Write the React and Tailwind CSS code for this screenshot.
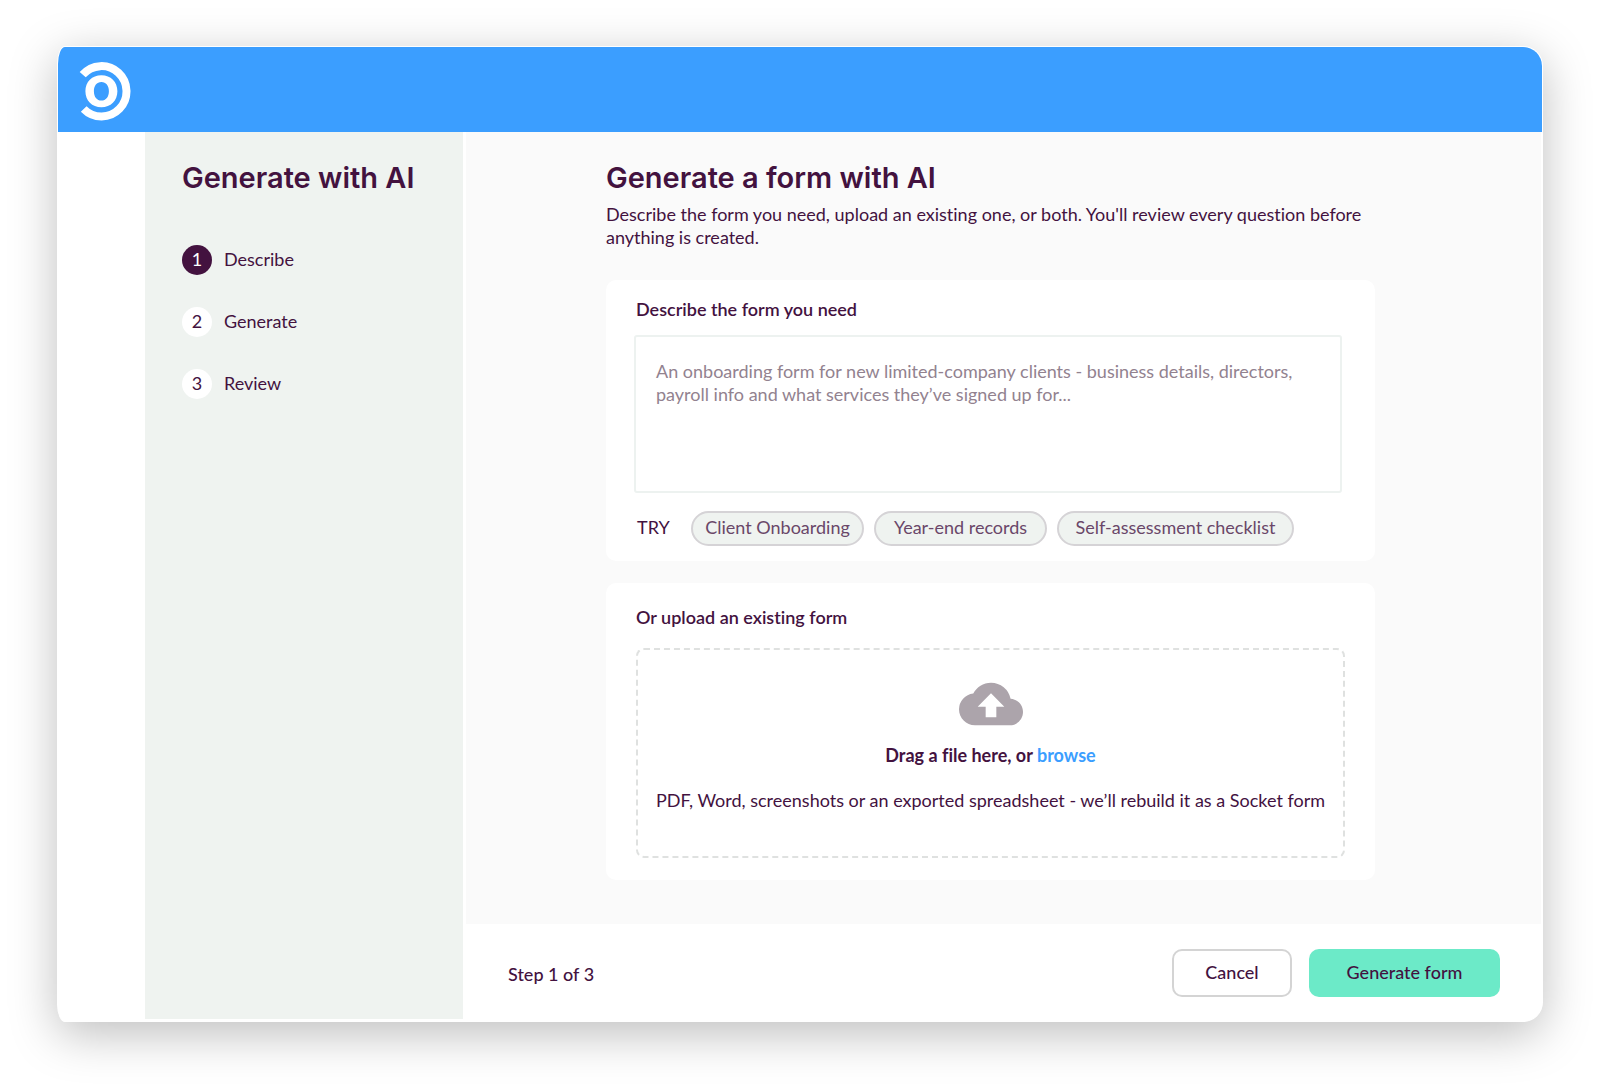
import { useRef, useState } from "react";
import { MdCloudUpload } from "react-icons/md";

const steps = ["Describe", "Generate", "Review"];

const suggestions = [
  { label: "Client Onboarding", width: "w-[173px]" },
  { label: "Year-end records", width: "w-[173px]" },
  { label: "Self-assessment checklist", width: "w-[237px]" },
];

function Logo() {
  return (
    <svg viewBox="0 0 52 60" className="w-[52px] h-[60px]" fill="none" stroke="#fff" aria-label="Socket">
      <path d="M3.7 12.7A25 25.2 0 1 1 4.7 47" strokeWidth="8" />
      <path
        d="M22.4 13.3c9.4 0 16 6.700 16 16s-6.600 16-16 16-16-6.700-16-16 6.600-16 16-16zm0 6.700c-4.600 0-7.500 3.700-7.500 9.300s2.900 9.300 7.500 9.300 7.500-3.700 7.500-9.300-2.900-9.300-7.500-9.300z"
        fill="#fff"
        fillRule="evenodd"
        stroke="none"
      />
    </svg>
  );
}

function Sidebar({ current }) {
  return (
    <aside className="w-[318px] shrink-0 bg-[#eff3f0] pl-[37px] pt-7 mb-0.5">
      <h2 className="font-['Inter',sans-serif] text-[29px] leading-9 font-semibold">Generate with AI</h2>
      <ol className="mt-[49px] flex flex-col gap-8">
        {steps.map((step, i) => (
          <li key={step} className="flex items-center gap-3">
            <span
              className={
                i + 1 === current
                  ? "size-[30px] pb-0.5 rounded-full flex items-center justify-center bg-[#43123f] text-white"
                  : "size-[30px] pb-0.5 rounded-full flex items-center justify-center bg-white"
              }
            >
              {i + 1}
            </span>
            <span className="pb-0.5">{step}</span>
          </li>
        ))}
      </ol>
    </aside>
  );
}

function DescribeCard({ value, onChange }) {
  return (
    <section className="bg-white rounded-[10px] pt-[17px] pb-[15px] pl-7 pr-[33px]">
      <label htmlFor="description" className="block pl-0.5 leading-6 font-semibold">
        Describe the form you need
      </label>
      <textarea
        id="description"
        value={value}
        onChange={(e) => onChange(e.target.value)}
        placeholder="An onboarding form for new limited-company clients - business details, directors, payroll info and what services they’ve signed up for..."
        className="block mt-[14px] w-full h-[158px] resize-none rounded-[3px] border-2 border-[#edf2f0] px-5 py-[23px] leading-[23px] placeholder:text-[#92828f] outline-none"
      />
      <div className="mt-[18px] flex items-center gap-2.5">
        <span className="w-[47px] pl-[3px] pb-0.5">TRY</span>
        {suggestions.map((s) => (
          <button
            key={s.label}
            type="button"
            onClick={() => onChange(s.label)}
            className={`${s.width} h-[35px] pb-0.5 rounded-full border-2 border-[#d5d3d6] bg-[#eff3f0] text-[#6a4769] whitespace-nowrap`}
          >
            {s.label}
          </button>
        ))}
      </div>
    </section>
  );
}

function UploadCard() {
  const fileInput = useRef(null);

  return (
    <section className="mt-[22px] bg-white rounded-[10px] pt-[22px] pb-[22px] px-[30px]">
      <h3 className="leading-6 font-semibold">Or upload an existing form</h3>
      <div className="mt-[19px] rounded-lg border-2 border-dashed border-[#dfe1e0] pt-[22px] pb-11 flex flex-col items-center text-center">
        <MdCloudUpload className="size-16 text-[#aca4ab]" />
        <p className="mt-[7px] leading-6 font-bold">
          Drag a file here, or{" "}
          <button type="button" className="text-[#3b9eff]" onClick={() => fileInput.current.click()}>
            browse
          </button>
        </p>
        <input ref={fileInput} type="file" aria-label="Upload a form" className="hidden" />
        <p className="mt-[21px] leading-6">
          PDF, Word, screenshots or an exported spreadsheet - we’ll rebuild it as a Socket form
        </p>
      </div>
    </section>
  );
}

export default function App() {
  const [description, setDescription] = useState("");

  return (
    <div className="min-h-screen bg-white flex pt-[46px] pb-[68px] px-[57px] font-['Lato',sans-serif] [font-variant-ligatures:no-common-ligatures] text-[18px] leading-[23px] text-[#43123f]">
      <div className="flex-1 flex flex-col bg-white overflow-hidden border border-white [border-radius:8px_20px_20px_8px/18px_20px_20px_18px] shadow-[0_12px_48px_rgba(0,0,0,0.26)]">
        {/* Top bar */}
        <header className="h-[85px] shrink-0 bg-[#3b9eff] flex items-center pt-1 pl-[21px]">
          <Logo />
        </header>

        <div className="flex-1 flex pl-[87px]">
          <Sidebar current={1} />

          <div className="flex-1 flex flex-col ml-[3px]">
            <main className="flex-1 bg-[#fafafa] mr-px pl-[140px] pr-12 pt-7 pb-[42px]">
              <div className="max-w-[769px]">
                <h1 className="font-['Inter',sans-serif] text-[29px] leading-9 font-semibold">Generate a form with AI</h1>
                <p className="mt-[7px] mb-[31px]">
                  Describe the form you need, upload an existing one, or both. You'll review every question before
                  anything is created.
                </p>
                <DescribeCard value={description} onChange={setDescription} />
                <UploadCard />
              </div>
            </main>

            {/* Footer */}
            <footer className="h-[97px] shrink-0 flex items-center justify-between pl-[42px] pr-[42px]">
              <span className="pt-1 font-medium">Step 1 of 3</span>
              <div className="flex gap-[17px]">
                <button type="button" className="w-[120px] h-12 rounded-[10px] border-2 border-[#d4d4d4] font-medium">
                  Cancel
                </button>
                <button type="button" className="w-[191px] h-12 rounded-[10px] bg-[#6ceac8] font-medium">
                  Generate form
                </button>
              </div>
            </footer>
          </div>
        </div>
      </div>
    </div>
  );
}
